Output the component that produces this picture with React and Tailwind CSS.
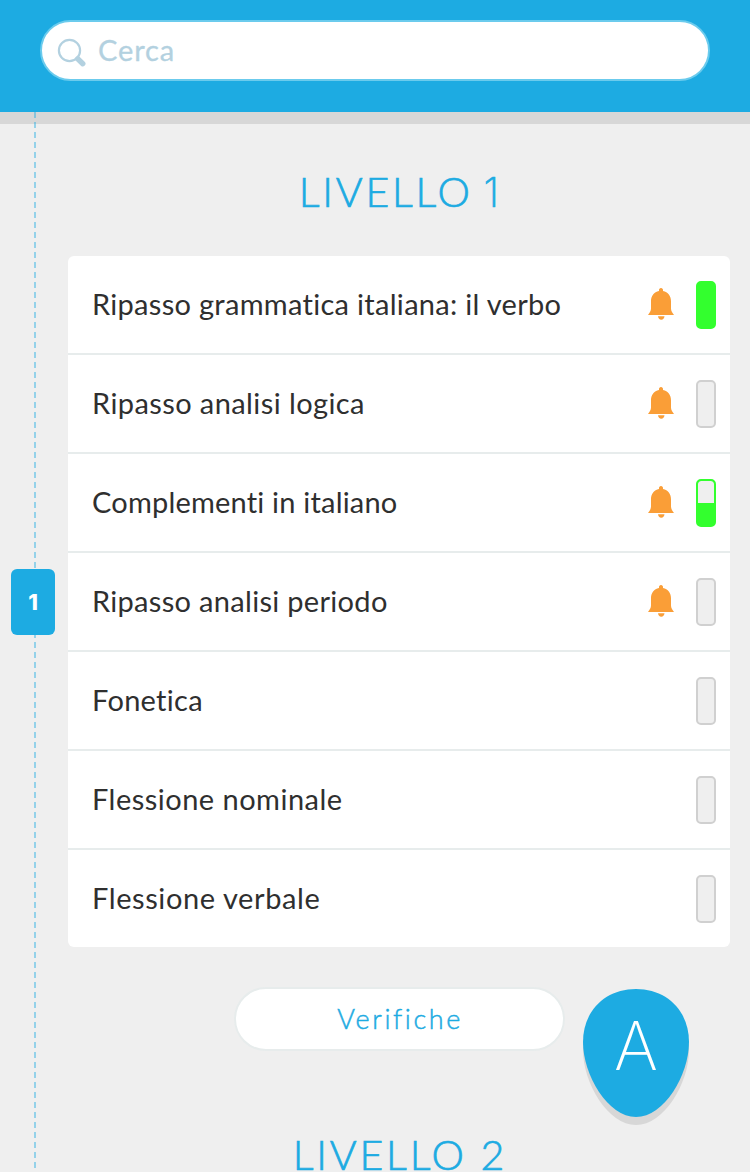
import React from "react";

const lessons = [
  { title: "Ripasso grammatica italiana: il verbo", bell: true, progress: "full", tracking: "tracking-[0.3px]" },
  { title: "Ripasso analisi logica", bell: true, progress: "empty", tracking: "tracking-[0.41px]" },
  { title: "Complementi in italiano", bell: true, progress: "half", tracking: "tracking-[0.2px]" },
  { title: "Ripasso analisi periodo", bell: true, progress: "empty", tracking: "tracking-[0.31px]" },
  { title: "Fonetica", bell: false, progress: "empty", tracking: "tracking-[0.28px]" },
  { title: "Flessione nominale", bell: false, progress: "empty", tracking: "tracking-[0.48px]" },
  { title: "Flessione verbale", bell: false, progress: "empty", tracking: "tracking-[0.59px]" },
];

function SearchIcon() {
  return (
    <svg width="30" height="30" viewBox="0 0 30 30" fill="none" stroke="#b3d1e0">
      <circle cx="12.5" cy="12.5" r="10.6" strokeWidth="2.2" />
      <path d="M19.5 19 21.5 21" strokeWidth="3" />
      <path d="M20.7 20.8 25.8 25.7" strokeWidth="5.4" strokeLinecap="round" />
    </svg>
  );
}

function BellIcon() {
  return (
    <svg width="26" height="32" viewBox="0 0 26 32" fill="#fa9e37">
      <path d="M13 0C11.7 0 11 1 11 2.2V3.1C6 4.3 3 8 3 13.2V20.5C3 23 1.7 24.8 0 26.9H26C24.300 24.800 23 23 23 20.500V13.200C23 8 20 4.300 15 3.100V2.200C15 1 14.300 0 13 0Z" />
      <path d="M10 28.300H16.500C16.200 30.300 15.100 31.800 13.250 31.800C11.400 31.800 10.300 30.300 10 28.300Z" />
    </svg>
  );
}

function EggShape() {
  const d = "M53 0C84 0 106 22 106 53C106 86 81 128 53 128C25 128 0 86 0 53C0 22 22 0 53 0Z";
  return (
    <svg className="absolute left-0 top-0" width="106" height="136" viewBox="0 0 106 136">
      <path d={d} transform="translate(0 8)" fill="#d7d7d7" />
      <path d={d} fill="#1dabe2" />
    </svg>
  );
}

function Progress({ state }) {
  if (state === "empty") {
    return <div className="h-12 w-5 rounded-[5px] border-2 border-[#d0d0d0] bg-[#efefef]" />;
  }
  return (
    <div className="flex h-12 w-5 flex-col justify-end overflow-hidden rounded-[5px] border-2 border-[#33ff2e] bg-[#33ff2e]">
      {state === "half" && <div className="mb-auto h-[22px] rounded-t-[3px] bg-[#efefef]" />}
    </div>
  );
}

export default function App() {
  return (
    <div className="flex h-[1172px] w-[750px] flex-col overflow-hidden bg-[#efefef] font-['Lato',sans-serif]">
      <header className="h-[112px] shrink-0 bg-[#1dabe2] px-10 pt-5 shadow-[0_12px_0_#d7d7d7]">
        <div className="flex h-[61px] items-center rounded-full border-2 border-[#6bcbed] bg-white pl-[15px]">
          <div className="mt-[4px]"><SearchIcon /></div>
          <span className="ml-[11px] pb-[2px] text-[29px] leading-none tracking-[0.9px] text-[#b3d1e0] [-webkit-text-stroke:0.3px_#b3d1e0]">Cerca</span>
        </div>
      </header>
      <div className="flex min-h-0 flex-1">
        <aside className="relative w-[68px] shrink-0">
          <div className="ml-[34px] h-full w-[2px] bg-[repeating-linear-gradient(to_bottom,#1dabe26e_0px,#1dabe26e_6px,transparent_6px,transparent_10px)]" />
          <div className="absolute left-[11px] top-[457px] flex h-[66px] w-11 items-center justify-center rounded-md bg-[#1dabe2] font-['Inter',sans-serif] text-[22px] font-extrabold text-white">
            1
          </div>
        </aside>
        <main className="flex w-[662px] shrink-0 flex-col items-center">
          <h1 className="mt-[54px] h-[52px] whitespace-nowrap text-[41px] font-light leading-[52px] tracking-[2.8px] text-[#1dabe2] [-webkit-text-stroke:0.7px_#1dabe2] [word-spacing:-3px]">
            LIVELLO <span className="font-['Inter',sans-serif] font-extralight tracking-normal">1</span>
          </h1>
          <ul className="mt-[38px] w-full shrink-0 divide-y-2 divide-[#e7ecec] overflow-hidden rounded-md bg-white">
            {lessons.map((l, i) => (
              <li
                key={l.title}
                className={
                  i === lessons.length - 1
                    ? "flex h-[97px] items-center pl-6 pr-[14px]"
                    : "flex h-[99px] items-center pl-6 pr-[14px]"
                }
              >
                <span className={`flex-1 whitespace-nowrap pb-[3px] text-[29px] leading-none text-[#2f2f2f] ${l.tracking}`}>{l.title}</span>
                {l.bell && <div className="mb-[2px] mr-[22px]"><BellIcon /></div>}
                <Progress state={l.progress} />
              </li>
            ))}
          </ul>
          <button className="mt-10 h-16 w-[331px] shrink-0 rounded-full border-2 border-[#e7ecec] bg-white pl-[2px] text-[27px] font-light tracking-[2.6px] text-[#1dabe2] [-webkit-text-stroke:0.5px_#1dabe2]">
            Verifiche
          </button>
          <h2 className="mt-[80px] h-[40px] shrink-0 whitespace-nowrap pl-[2px] text-[41px] font-light leading-[48px] tracking-[2.8px] text-[#1dabe2] [-webkit-text-stroke:0.7px_#1dabe2]">
            LIVELLO 2
          </h2>
        </main>
      </div>
      <button className="absolute left-[583px] top-[989px] flex h-32 w-[106px] justify-center pt-[23px] font-['Inter',sans-serif] text-[67px] font-extralight leading-[68px] text-white">
        <EggShape />
        <span className="relative">A</span>
      </button>
    </div>
  );
}
